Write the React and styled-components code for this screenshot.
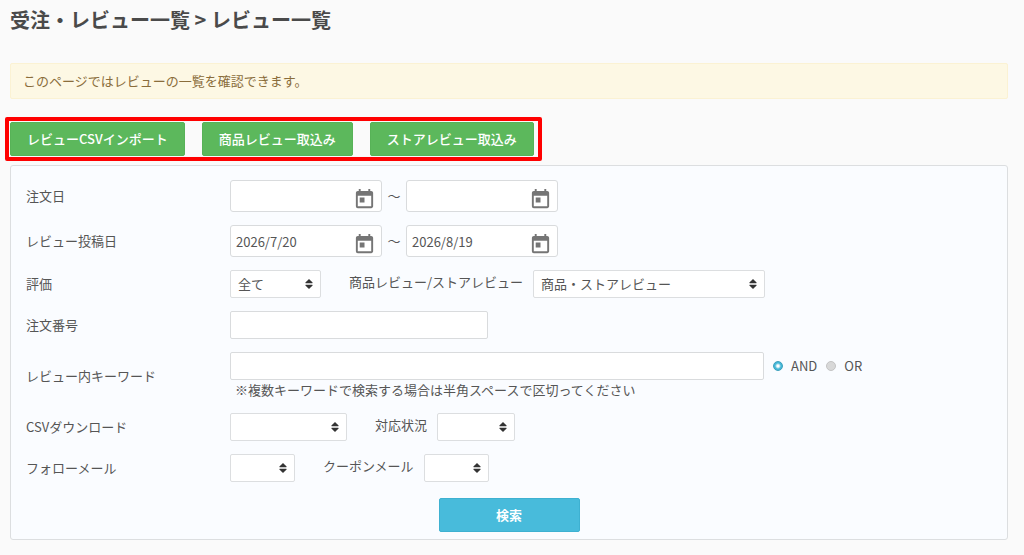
import React, { useState } from 'react';
import { createGlobalStyle, styled } from 'styled-components';
import { MdToday } from 'react-icons/md';

const GlobalStyle = createGlobalStyle`
  * {
    box-sizing: border-box;
  }
  body {
    margin: 0;
    background: #fafafa;
    color: #555;
    font-family: 'Noto Sans CJK JP', 'Noto Sans', sans-serif;
    font-size: 13px;
    line-height: 20px;
  }
  button, input, select {
    margin: 0;
    color: inherit;
    font: inherit;
  }
`;

const Page = styled.main`
  padding: 6px 16px 15px 10px;
`;

const Title = styled.h1`
  margin: 0 0 29px;
  color: #4a4a4a;
  font-size: 20px;
  font-weight: 700;
  line-height: 28px;
`;

const Notice = styled.p`
  margin: 0 0 18px;
  padding: 7px 12px;
  border: 1px solid #fbf2d3;
  border-radius: 2px;
  background: #fdf8e4;
  color: #8a6d3b;
`;

const ActionBar = styled.div`
  display: flex;
  flex-wrap: wrap;
  gap: 17px;
  width: fit-content;
  margin: 0 0 4px -5px;
  padding: 1px 4px 1px 1px;
  border: 4px solid #ff0000;
  border-radius: 2px;
`;

const ActionButton = styled.button`
  height: 34px;
  padding: 0 16px;
  border: 1px solid #57b257;
  border-radius: 2px;
  background: #5cb85c;
  color: #fff;
  font-weight: 500;
  cursor: pointer;
`;

const SearchForm = styled.form`
  display: flex;
  flex-direction: column;
  gap: 13px;
  padding: 14px 15px 7px;
  border: 1px solid #dcdee0;
  border-radius: 3px;
  background: #fafcff;
`;

const FormRow = styled.div`
  display: grid;
  grid-template-columns: 204px 1fr;
  align-items: center;
`;

const Controls = styled.div`
  display: flex;
  flex-wrap: wrap;
  align-items: center;
`;

const SideLabel = styled.label`
  margin: 0 10px 0 28px;
  padding-bottom: 4px;
`;

const DateBox = styled.div`
  display: flex;
  align-items: flex-end;
  width: 152px;
  height: 32px;
  border: 1px solid #d9dbdd;
  border-radius: 3px;
  background: #fff;
  input {
    flex: 1;
    min-width: 0;
    height: 30px;
    padding: 0 0 0 5px;
    border: 0;
    background: none;
    outline: none;
  }
  button {
    display: flex;
    padding: 0 5px 0 0;
    border: 0;
    background: none;
    color: #757575;
    cursor: pointer;
  }
`;

const Tilde = styled.span`
  width: 24px;
  text-align: center;
`;

const TextInput = styled.input`
  width: ${({ $width }) => $width}px;
  max-width: 100%;
  height: 28px;
  padding: 0 7px;
  border: 1px solid #d9dbdd;
  border-radius: 2px;
  background: #fff;
`;

const SelectBox = styled.div`
  position: relative;
  width: ${({ $width }) => $width}px;
  select {
    display: block;
    width: 100%;
    height: 28px;
    padding: 0 20px 0 7px;
    border: 1px solid #dcdee0;
    border-radius: 2px;
    background: #fff;
    appearance: none;
  }
  svg {
    position: absolute;
    top: 9px;
    right: 8px;
    fill: #333;
    pointer-events: none;
  }
`;

const RadioGroup = styled.div`
  display: flex;
  gap: 9px;
  margin-left: 9px;
`;

const RadioLabel = styled.label`
  display: flex;
  align-items: center;
  gap: 8px;
  input {
    width: 10px;
    height: 10px;
    border: 1px solid #c4c4c4;
    border-radius: 50%;
    background: #d8d8d8;
    appearance: none;
  }
  input:checked {
    border-color: #3a9fbc;
    background: radial-gradient(circle, #fff 1px, #45b8d8 3px);
  }
`;

const Hint = styled.p`
  width: 100%;
  margin: 0;
  padding-left: 5px;
`;

const SearchButton = styled.button`
  align-self: center;
  width: 141px;
  height: 34px;
  margin-top: 3px;
  border: 1px solid #3eb1d1;
  border-radius: 2px;
  background: #48bbdb;
  color: #fff;
  font-weight: 700;
  cursor: pointer;
`;

function DateField({ id, label, defaultValue }) {
  return (
    <DateBox>
      <input id={id} type='text' aria-label={label} defaultValue={defaultValue} />
      <button type='button' aria-label={label}>
        <MdToday size={23} />
      </button>
    </DateBox>
  );
}

function Select({ id, width, options = [''] }) {
  return (
    <SelectBox $width={width}>
      <select id={id}>
        {options.map((option) => (
          <option key={option}>{option}</option>
        ))}
      </select>
      <svg width='8' height='10' viewBox='0 0 8 10' aria-hidden='true'>
        <path d='M4 0L7.6 3.6Q7.8 4.2 7.2 4.2H.8Q.2 4.2 .4 3.6Z' />
        <path d='M4 10L7.6 6.4Q7.8 5.8 7.2 5.8H.8Q.2 5.8 .4 6.4Z' />
      </svg>
    </SelectBox>
  );
}

export default function App() {
  const [operator, setOperator] = useState('AND');

  return (
    <>
      <GlobalStyle />
      <Page>
        <Title>受注・レビュー一覧 &gt; レビュー一覧</Title>
        <Notice>このページではレビューの一覧を確認できます。</Notice>
        <ActionBar>
          <ActionButton type='button'>レビューCSVインポート</ActionButton>
          <ActionButton type='button'>商品レビュー取込み</ActionButton>
          <ActionButton type='button'>ストアレビュー取込み</ActionButton>
        </ActionBar>
        <SearchForm onSubmit={(e) => e.preventDefault()}>
          <FormRow>
            <label htmlFor='orderFrom'>注文日</label>
            <Controls>
              <DateField id='orderFrom' label='注文日' />
              <Tilde>～</Tilde>
              <DateField id='orderTo' label='注文日' />
            </Controls>
          </FormRow>
          <FormRow>
            <label htmlFor='postedFrom'>レビュー投稿日</label>
            <Controls>
              <DateField id='postedFrom' label='レビュー投稿日' defaultValue='2026/7/20' />
              <Tilde>～</Tilde>
              <DateField id='postedTo' label='レビュー投稿日' defaultValue='2026/8/19' />
            </Controls>
          </FormRow>
          <FormRow>
            <label htmlFor='rating'>評価</label>
            <Controls>
              <Select id='rating' width={91} options={['全て']} />
              <SideLabel htmlFor='reviewType'>商品レビュー/ストアレビュー</SideLabel>
              <Select id='reviewType' width={232} options={['商品・ストアレビュー']} />
            </Controls>
          </FormRow>
          <FormRow>
            <label htmlFor='orderNumber'>注文番号</label>
            <Controls>
              <TextInput id='orderNumber' type='text' $width={258} />
            </Controls>
          </FormRow>
          <FormRow>
            <label htmlFor='keyword'>レビュー内キーワード</label>
            <Controls>
              <TextInput id='keyword' type='text' $width={534} />
              <RadioGroup>
                {['AND', 'OR'].map((value) => (
                  <RadioLabel key={value}>
                    <input
                      type='radio'
                      name='operator'
                      checked={operator === value}
                      onChange={() => setOperator(value)}
                    />
                    {value}
                  </RadioLabel>
                ))}
              </RadioGroup>
              <Hint>※複数キーワードで検索する場合は半角スペースで区切ってください</Hint>
            </Controls>
          </FormRow>
          <FormRow>
            <label htmlFor='csvDownload'>CSVダウンロード</label>
            <Controls>
              <Select id='csvDownload' width={117} />
              <SideLabel htmlFor='status'>対応状況</SideLabel>
              <Select id='status' width={78} />
            </Controls>
          </FormRow>
          <FormRow>
            <label htmlFor='followMail'>フォローメール</label>
            <Controls>
              <Select id='followMail' width={65} />
              <SideLabel htmlFor='couponMail'>クーポンメール</SideLabel>
              <Select id='couponMail' width={65} />
            </Controls>
          </FormRow>
          <SearchButton type='submit'>検索</SearchButton>
        </SearchForm>
      </Page>
    </>
  );
}
